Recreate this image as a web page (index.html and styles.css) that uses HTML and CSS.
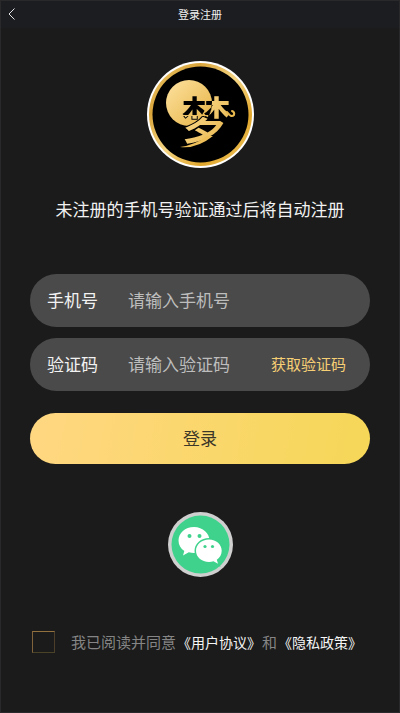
FILE: index.html
```html
<!DOCTYPE html>
<html lang="zh-CN">
<head>
<meta charset="utf-8">
<meta name="viewport" content="width=device-width, initial-scale=1">
<title>登录注册</title>
<link rel="stylesheet" href="styles.css">
</head>
<body>
<header class="topbar">
  <button class="back" type="button" aria-label="返回">
    <svg viewBox="0 0 10 14" width="10" height="14" aria-hidden="true"><path d="M7.500 1.500 2 7l5.500 5.500"/></svg>
  </button>
  <h1 class="title">登录注册</h1>
</header>
<main class="content">
  <svg class="logo" viewBox="0 0 107 107" role="img" aria-label="梦">
    <defs>
      <linearGradient id="ring" x1="0" y1="0" x2="1" y2="1">
        <stop offset="0" stop-color="#f0cf78"/><stop offset=".25" stop-color="#d9a43a"/>
        <stop offset=".5" stop-color="#f6d684"/><stop offset=".75" stop-color="#e0a62c"/>
        <stop offset="1" stop-color="#f4d070"/>
      </linearGradient>
      <linearGradient id="gold" x1="0" y1="0" x2="1" y2="1">
        <stop offset="0" stop-color="#fde2a0"/><stop offset="1" stop-color="#e6b243"/>
      </linearGradient>
      <clipPath id="moon-top"><path d="M19 19h46v23q0 6-3 12H19z"/></clipPath>
      <clipPath id="off-moon"><path d="M65 19h42v88H0V55h62q3-6 3-13z"/></clipPath>
    </defs>
    <circle cx="53.500" cy="53.500" r="53.500" fill="#fff"/>
    <circle cx="53.500" cy="53.500" r="51.500" fill="url(#ring)"/>
    <circle cx="53.500" cy="53.500" r="48" fill="#000"/>
    <circle cx="42" cy="42" r="23" fill="url(#gold)"/>
    <g class="emblem">
      <text x="34" y="78" fill="#000" clip-path="url(#moon-top)">梦</text>
      <text x="34" y="78" fill="url(#gold)" stroke="#000" stroke-width="2" paint-order="stroke" clip-path="url(#off-moon)">梦</text>
    </g>
    <path d="M80 51q4 6 7 3q1-3-2-4" fill="none" stroke="#e9b84e" stroke-width="2" stroke-linecap="round"/>
    <path d="M66 75Q50 88 33 86Q48 84 60 75z" fill="#eebf59"/>
  </svg>
  <p class="notice">未注册的手机号验证通过后将自动注册</p>
  <form class="form">
    <div class="field">
      <label for="phone">手机号</label>
      <input id="phone" type="tel" placeholder="请输入手机号">
    </div>
    <div class="field">
      <label for="code">验证码</label>
      <input id="code" type="text" placeholder="请输入验证码">
      <button class="get-code" type="button">获取验证码</button>
    </div>
    <button class="login" type="submit">登录</button>
  </form>
  <button class="wechat" type="button" aria-label="微信登录">
    <svg viewBox="0 0 65 65" aria-hidden="true">
      <circle cx="32.500" cy="32.500" r="32.500" fill="#cfcfcf"/>
      <circle cx="32.500" cy="32.500" r="29" fill="#3ed28c"/>
      <path d="M26 15C17 15 10.500 21 10.500 28.500c0 4.500 2.200 8 5.800 10.400L15 43.500l5.800-3.200c1.700.5 3.400.7 5.200.7 9 0 15.500-5.500 15.500-12.500S35 15 26 15z" fill="#fff"/>
      <path d="M41 27.500c-7.400 0-13 5-13 11.300S33.600 50 41 50c1.700 0 3.100-.2 4.500-.7l4.500 2.500-1.200-4c3-2 4.900-5.300 4.900-9 0-6.300-5.400-11.300-12.700-11.300z" fill="#fff" stroke="#3ed28c" stroke-width="3" paint-order="stroke"/>
      <g fill="#3ed28c"><circle cx="21.500" cy="24" r="2"/><circle cx="31.500" cy="24" r="2"/><circle cx="37" cy="34.500" r="1.600"/><circle cx="44.500" cy="34.500" r="1.600"/></g>
    </svg>
  </button>
  <div class="agreement">
    <input id="agree" type="checkbox">
    <p><label for="agree">我已阅读并同意</label><a href="#terms">《用户协议》</a>和<a href="#privacy">《隐私政策》</a></p>
  </div>
</main>
</body>
</html>
```
FILE: styles.css
```css
* { box-sizing: border-box; }

body {
  margin: 0;
  min-height: 100vh;
  background: #1b1b1b;
  border: 1px solid #29292b;
  color: #f2f2f2;
  font-family: "Noto Sans CJK SC", sans-serif;
}

button {
  padding: 0;
  border: 0;
  background: none;
  font-family: inherit;
  cursor: pointer;
}

.topbar {
  display: grid;
  grid-template-columns: 40px 1fr 40px;
  align-items: center;
  height: 27px;
  padding-bottom: 2px;
  background: #1c1d21;
}

.back {
  display: flex;
  padding-left: 6px;
}

.back path {
  fill: none;
  stroke: #e4e4e4;
  stroke-width: 1;
}

.title {
  margin: 0;
  font-size: 11px;
  font-weight: 400;
  line-height: 16px;
  text-align: center;
}

.content {
  display: flex;
  flex-direction: column;
  align-items: center;
  padding: 33px 29px 48px;
}

.logo {
  width: 107px;
  height: 107px;
}

.emblem {
  font-size: 50px;
  font-weight: 500;
}

.notice {
  margin: 29px 0 53px;
  font-size: 17px;
  line-height: 24px;
  white-space: nowrap;
}

.form {
  display: flex;
  flex-direction: column;
  gap: 11px;
  width: 100%;
}

.field {
  display: flex;
  align-items: center;
  height: 53px;
  padding: 0 24px 2px 17px;
  border-radius: 27px;
  background: #4a4a4a;
  font-size: 17px;
}

.field label {
  flex: none;
  width: 81px;
}

.field input {
  flex: 1;
  min-width: 0;
  padding: 0;
  border: 0;
  outline: 0;
  background: none;
  color: #f2f2f2;
  font: inherit;
}

.field input::placeholder {
  color: #bdbdbd;
  opacity: 1;
}

.get-code {
  flex: none;
  color: #f6cf75;
  font-size: 15px;
}

.login {
  height: 51px;
  margin-top: 11px;
  padding-bottom: 2px;
  border-radius: 26px;
  background: linear-gradient(100deg, #ffd782, #f6d757);
  color: #3c3728;
  font-size: 17px;
}

.wechat {
  width: 65px;
  height: 65px;
  margin: 48px 0 54px;
}

.wechat svg { display: block; }

.agreement {
  display: flex;
  align-items: center;
  align-self: stretch;
  gap: 16px;
  padding-left: 2px;
  color: #858585;
  font-size: 15px;
  line-height: 22px;
  white-space: nowrap;
}

.agreement p { margin: 0; }

.agreement input {
  appearance: none;
  flex: none;
  width: 23px;
  height: 22px;
  margin: 0;
  border: 1px solid;
  border-color: #93713f #4c3f2a #4b4328 #80633a;
}

.agreement input:checked { background: #f6cf75; }

.agreement a {
  margin: 0 1px;
  color: #f5f5f5;
  font-size: 14px;
  text-decoration: none;
}
```
